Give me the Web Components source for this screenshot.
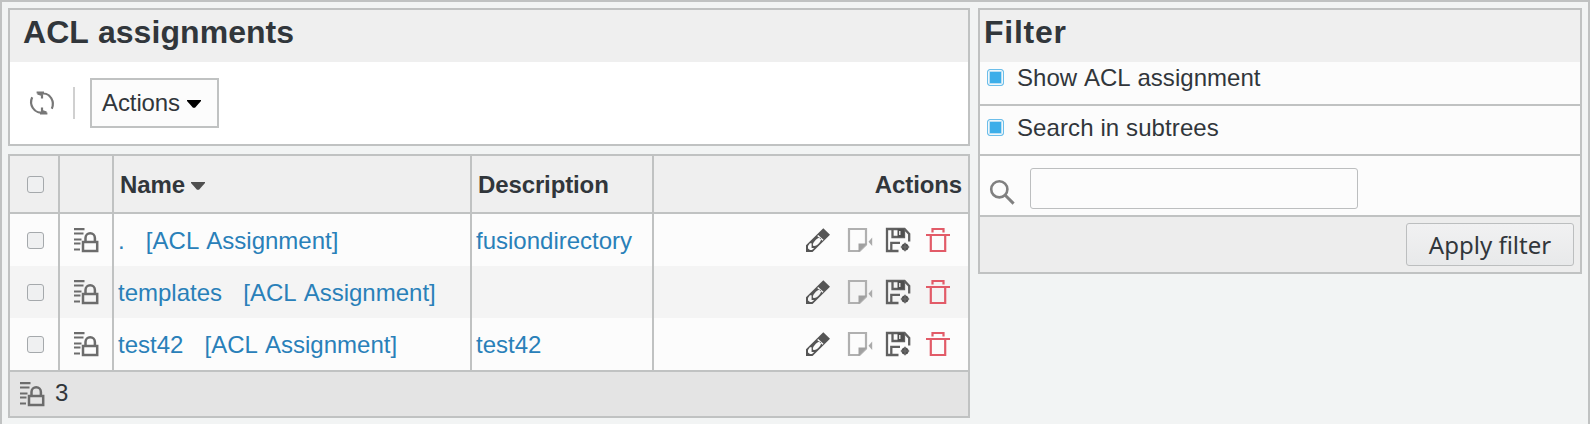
<!DOCTYPE html>
<html lang="en">
<head>
<meta charset="utf-8">
<title>ACL assignments</title>
<style>
html,body{margin:0;height:100%}
body{background:#f2f4f4;overflow:hidden;font:24px/28px "Liberation Sans",Arial,sans-serif;color:#31363b;font-kerning:none}
</style>
</head>
<body>
<acl-app></acl-app>
<script>
const define = (name, html, setup) => {
  const tpl = document.createElement('template');
  tpl.innerHTML = html;
  customElements.define(name, class extends HTMLElement {
    constructor() {
      super();
      this.attachShadow({mode: 'open'}).append(tpl.content.cloneNode(true));
    }
    connectedCallback() { if (setup) setup(this, this.shadowRoot); }
  });
};

const glyphs = {
  refresh: '<g fill="none" stroke="#777" stroke-width="2.2"><path d="M9.500 3.300C14 1.500 18.800 3 21.300 7.200C23.400 10.800 23.300 14.500 21.800 17.800M6.600 1.500H14M7.600 2.400 12 4V7.500"/><path d="M14.500 20.700C10 22.500 5.200 21 2.700 16.800C.6 13.200.7 9.500 2.200 6.200M17.400 22.500H10M16.400 21.600 12 20V16.500"/></g>',
  acl: '<g fill="none" stroke="#6c6c6c" stroke-width="2.200"><path d="M0 1.200H10.500M0 5.500H9.500M0 11.500H7.500M0 15.500H6.500M0 21.500H6"/><path d="M9 14H23.200V23H9ZM11.500 13.500V10A4.700 4.700 0 0 1 20.900 10V13.500" stroke-width="2.500"/></g>',
  pencil: '<path fill-rule="evenodd" d="M17.300.2 24 6.800 7.300 23.200 6.500 24H0V17.300ZM2 18V20.500L4 22H6L8.200 19.900H5.600V15.300H3.900ZM8.600 13.200C6.600 15.500 6.500 17.200 7.500 17.900C9.300 18.300 11.400 16.900 13.200 14.900C15 12.900 15.600 10.900 14.700 10.200C13 9.100 10.700 10.900 8.600 13.200ZM11.200 8 16.500 12.800 17.500 11.800 12.200 7Z" fill="#555"/>',
  snapshot: '<path d="M1 1H18V16.500L11.500 23H1Z" fill="none" stroke="#b0b0b0" stroke-width="2.200"/><path d="M10.500 15.500H18.800L10.500 24Z" fill="#a0a0a0"/><path d="M24.200 9.500V18L20.500 13.700Z" fill="#aaa"/>',
  save: '<g fill="none" stroke="#606060" stroke-width="2.300"><path d="M12.500 23H1V1H18.500L23.200 6V13.500M6.500 1V9H18V1M5.300 23V14.800H14"/></g><path d="M11.500 1H18V9H11.500Z" fill="#505050"/><path d="M13 3H14.500V7H13Z" fill="#ddd"/><circle cx="19" cy="19" r="3.500" fill="#505050"/><path d="M19 14.800V23.200M14.800 19H23.200" stroke="#666" stroke-width="1.600"/>',
  trash: '<g fill="none" stroke="#e25b68" stroke-width="2.200"><path d="M0 7H24M6.500 4.500V1H17.500V4.500M4.800 8V23H19.200V8"/></g>',
  search: '<g fill="none" stroke="#808080" stroke-width="2.600"><circle cx="9.300" cy="9.300" r="8.100"/><path d="M15 15 23.600 23.600" stroke-width="3"/></g>',
  arrow: '<path d="M0 0H14V1L8 7.700H6L0 1Z" fill="currentColor"/>'
};
define('ui-icon', '<style>:host{display:block;flex:none;width:24px;height:24px}svg{display:block;width:100%;height:100%;overflow:visible}</style><div></div>', (el, r) => {
  const n = el.getAttribute('name');
  r.querySelector('div').innerHTML = `<svg viewBox="0 0 ${n === 'arrow' ? '14 8' : '24 24'}" style="height:${n === 'arrow' ? 8 : 24}px">${glyphs[n]}</svg>`;
});

define('check-box', `<style>
:host{display:block;flex:none;box-sizing:border-box;width:17px;height:17px;border:1px solid #a5a9ac;border-radius:3px;background:#eff0f1}
:host([checked]){border-color:#6cbeea;background:#3daee9;box-shadow:inset 0 0 0 1px #eff7fb,inset 0 0 0 2px #b9dff3}
</style>`);

define('page-title', `<style>
:host{display:block;box-sizing:border-box;height:52px;background:#efefef;padding:4px 0 0 var(--inset,4px);font-size:32px;line-height:36px;font-weight:bold}
</style><slot></slot>`);

define('tool-bar', `<style>
:host{display:flex;align-items:center;height:82px;padding-left:20px;background:#fff}
i{width:2px;height:32px;background:#d0d0d0;margin:0 15px 0 19px}
.menu{display:flex;align-items:center;box-sizing:border-box;width:129px;height:50px;border:2px solid #c0c2c2;background:#fcfcfc;padding-left:10px;letter-spacing:-.1px}
.menu ui-icon{width:14px;height:8px;color:#000;margin:2px 0 0 7px}
</style><ui-icon name="refresh"></ui-icon><i></i><div class="menu">Actions<ui-icon name="arrow"></ui-icon></div>`);

const grid = 'display:grid;grid-template-columns:48px 52px 356px 180px 314px;column-gap:2px;background:#c0c2c2;';
define('list-head', `<style>
:host{${grid}height:56px;border-bottom:2px solid #c0c2c2;font-weight:bold;letter-spacing:-.12px}
div{display:flex;align-items:center;background:#efefef;padding:1px 6px 0}
div.c{padding:0 0 0 17px}
div:last-child{justify-content:flex-end}
ui-icon{width:14px;height:8px;color:#505050;margin:2px 0 0 6px}
</style><div class="c"><check-box></check-box></div><div></div><div>Name<ui-icon name="arrow"></ui-icon></div><div>Description</div><div>Actions</div>`);

define('list-row', `<style>
:host{${grid}height:52px;--row:#fcfcfc}
:host([odd]){--row:#f4f4f4}
div{display:flex;align-items:center;background:var(--row);padding:2px 4px 0;color:#2980b9;white-space:pre}
.t{word-spacing:.4px}
.c{padding:0 0 0 17px}.i{padding:0 0 0 14px}
.a{padding:0 18px 0 0;justify-content:flex-end;gap:16px}
.a ui-icon:nth-child(2){margin:0 -2px 0 2px}
</style><div class="c"><check-box></check-box></div><div class="i"><ui-icon name="acl"></ui-icon></div><div class="t"><slot></slot></div><div><slot name="desc"></slot></div>
<div class="a"><ui-icon name="pencil"></ui-icon><ui-icon name="snapshot"></ui-icon><ui-icon name="save"></ui-icon><ui-icon name="trash"></ui-icon></div>`);

define('list-foot', `<style>
:host{display:flex;align-items:center;gap:11px;height:42px;padding-bottom:2px;border-top:2px solid #c0c2c2;background:#e4e4e4;padding-left:10px}
ui-icon{margin-top:1px}
</style><ui-icon name="acl"></ui-icon><slot></slot>`);

define('filter-row', `<style>
:host{display:flex;box-sizing:border-box;border-bottom:2px solid #c0c2c2;background:#fcfcfc;padding-left:7px;gap:13px}
check-box{margin-top:7px}
span{margin-top:2px;letter-spacing:.04px}
:host([tall]) check-box{margin-top:13px}
:host([tall]) span{margin-top:8px;letter-spacing:.1px}
</style><check-box checked></check-box><span><slot></slot></span>`);

define('search-row', `<style>
:host{display:flex;box-sizing:border-box;height:61px;border-bottom:2px solid #c0c2c2;background:#fcfcfc;padding:12px 0 0 10px;gap:16px}
ui-icon{margin-top:12px}
input{box-sizing:border-box;width:328px;height:41px;border:1px solid #bcbebf;border-radius:3px;background:#fcfcfc;margin:0;padding:0 8px;font:inherit}
</style><ui-icon name="search"></ui-icon><input type="text" aria-label="Search">`);

define('action-bar', `<style>
:host{display:flex;justify-content:flex-end;box-sizing:border-box;height:55px;background:#ededed;padding:6px 6px 0 0}
button{box-sizing:border-box;width:168px;height:43px;border:1px solid #bcbebf;border-radius:3px;background:linear-gradient(#f1f1f2,#e8e9ea);color:inherit;font:24px/32px "Noto Sans",sans-serif;padding:1px 0 0;margin:0;white-space:nowrap}
</style><button><slot></slot></button>`);

define('ui-panel', `<style>:host{display:block;border:2px solid #c0c2c2}</style><slot></slot>`);

define('acl-app', `<style>
:host{display:grid;grid-template-columns:962px 604px;column-gap:8px;align-items:start;box-sizing:border-box;height:424px;border:2px solid #c0c2c2;border-bottom:0;padding:6px}
main{display:grid;gap:8px}
page-title.main{--inset:13px;letter-spacing:.06px}
page-title.side{letter-spacing:.75px}
filter-row:not([tall]){height:44px}
filter-row[tall]{height:50px}
</style>
<main>
<ui-panel><page-title class="main">ACL assignments</page-title><tool-bar></tool-bar></ui-panel>
<ui-panel><list-head></list-head>
<list-row>.&nbsp;&nbsp; [ACL Assignment]<span slot="desc">fusiondirectory</span></list-row>
<list-row odd>templates&nbsp;&nbsp; [ACL Assignment]</list-row>
<list-row>test42&nbsp;&nbsp; [ACL Assignment]<span slot="desc">test42</span></list-row>
<list-foot>3</list-foot></ui-panel>
</main>
<ui-panel><page-title class="side">Filter</page-title>
<filter-row>Show ACL assignment</filter-row>
<filter-row tall>Search in subtrees</filter-row>
<search-row></search-row>
<action-bar>Apply filter</action-bar></ui-panel>`);
</script>
</body>
</html>
